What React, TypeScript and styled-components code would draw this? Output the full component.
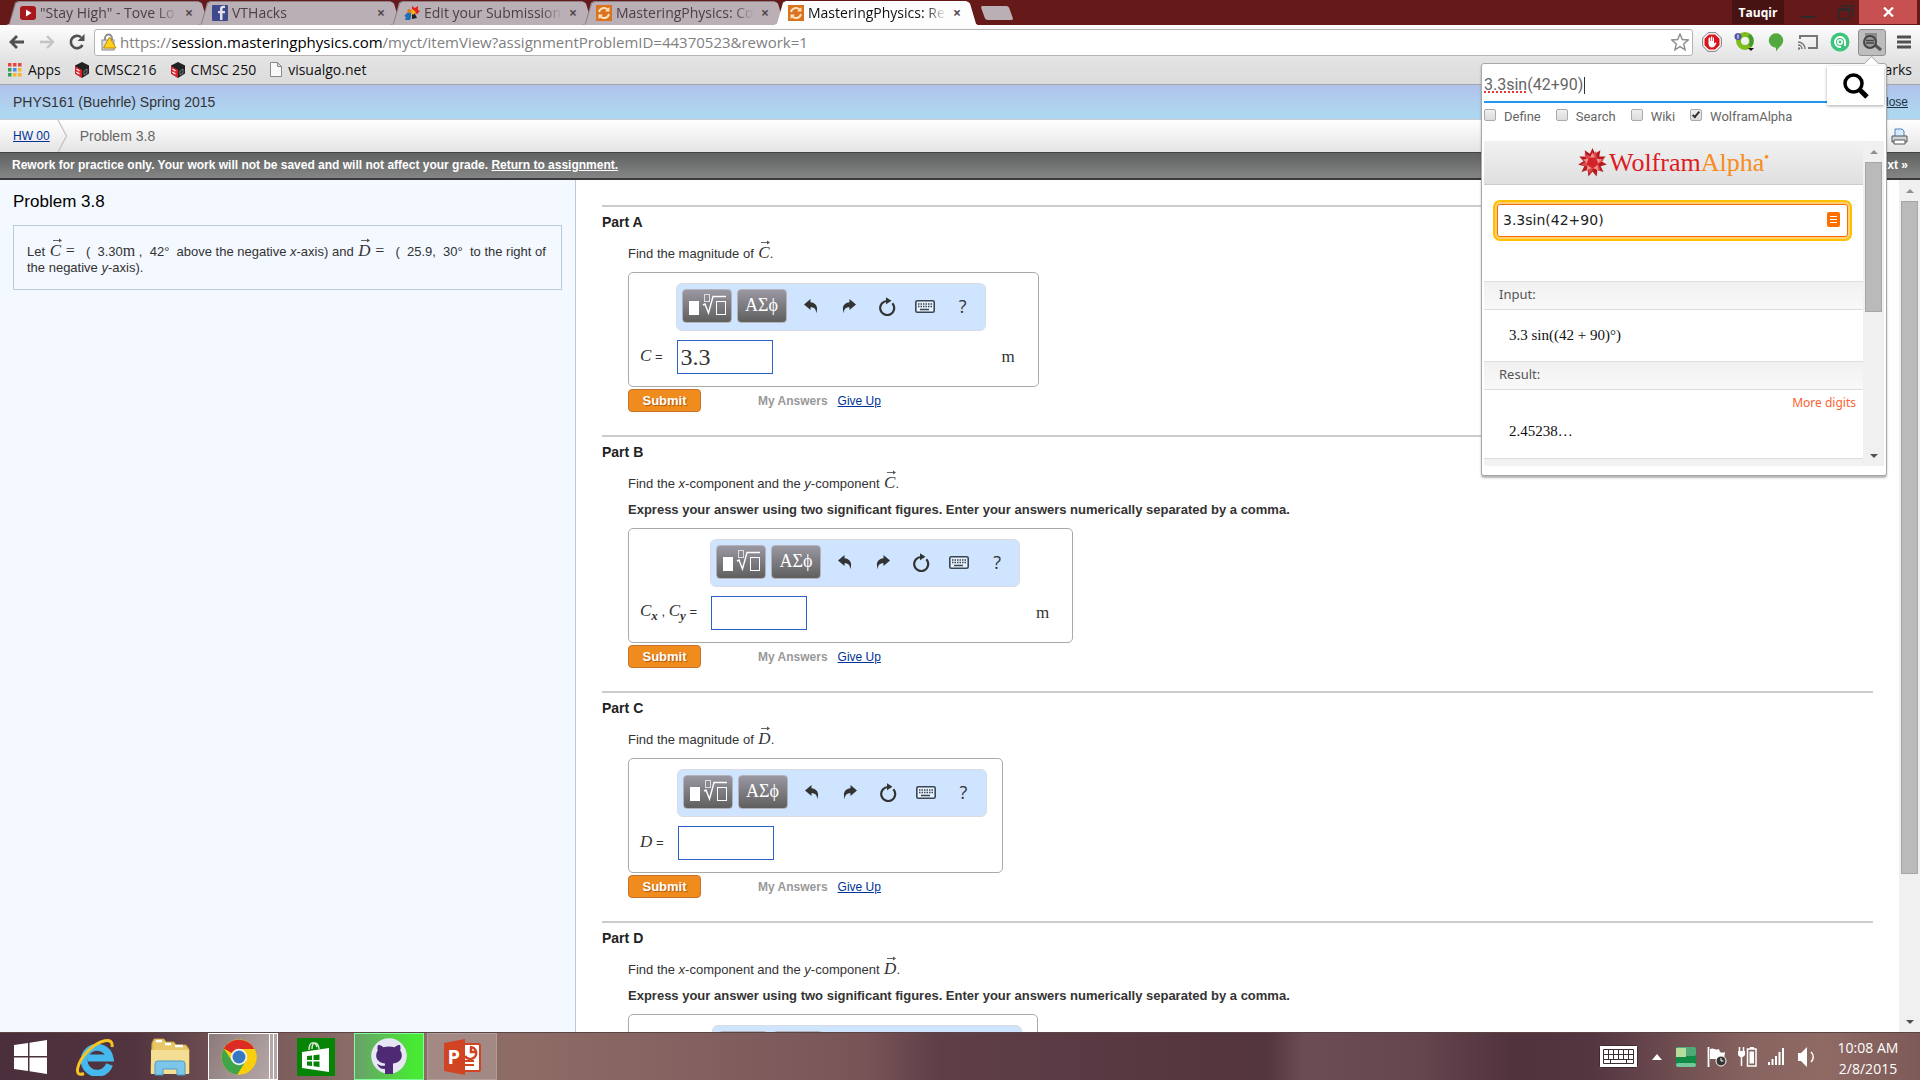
import React from "react";
import styled, { createGlobalStyle, css } from "styled-components";

const ui = `"Open Sans", "Noto Sans", sans-serif`;
const arial = `"Liberation Sans", Arial, sans-serif`;
const serif = `"Liberation Serif", "Times New Roman", serif`;

const Global = createGlobalStyle`
  *, *::before, *::after { box-sizing: border-box; }
  body { margin: 0; font-family: ${arial}; color: #333; background: #fff; overflow: hidden; }
  button { font: inherit; color: inherit; padding: 0; border: 0; background: none; }
  input { font: inherit; color: inherit; margin: 0; outline: none; }
  p, h1, h2 { margin: 0; }
  svg { display: block; flex: none; }
`;

const Screen = styled.div`
  position: relative;
  display: flex;
  flex-direction: column;
  height: 100vh;
`;

/* ---------- browser chrome ---------- */

const TabStrip = styled.header`
  display: flex;
  align-items: flex-end;
  height: 25px;
  padding-left: 6px;
  background: #661919;
  font-family: ${ui};
`;

const TabBox = styled.div<{ $active?: boolean }>`
  position: relative;
  z-index: ${(p) => (p.$active ? 2 : 1)};
  display: flex;
  align-items: center;
  width: 204px;
  height: 24px;
  margin-right: -12px;
  padding: 0 14px;
  gap: 4px;
  font-size: 14px;
  line-height: 22px;
  color: ${(p) => (p.$active ? "#111" : "#4b4045")};
  &::before, &::after {
    content: "";
    position: absolute;
    z-index: -1;
    inset: 0;
    background: ${(p) => (p.$active ? "#fdfdfd" : "#8d7f86")};
    clip-path: polygon(0 100%, 3px 95%, 9px 6%, 12px 0, 192px 0, 195px 6%, 201px 95%, 100% 100%);
  }
  &::after {
    inset: 1px 1px 0;
    background: ${(p) => (p.$active ? "#fdfdfd" : "#bbafb6")};
  }
`;

const TabTitle = styled.button`
  width: 138px;
  overflow: hidden;
  white-space: nowrap;
  text-align: left;
  mask-image: linear-gradient(90deg, #000 85%, transparent);
`;

const TabClose = styled.button`
  width: 14px;
  font-size: 14px;
  line-height: 16px;
  font-weight: 700;
  text-align: center;
  color: #56494e;
`;

const NewTab = styled.button`
  width: 28px;
  height: 14px;
  margin: 0 0 5px 17px;
  border-radius: 2px;
  background: #bbafb6;
  transform: skewX(20deg);
`;

const WindowControls = styled.div`
  display: flex;
  align-self: stretch;
  margin-left: auto;
  padding-right: 3px;
`;

const UserName = styled.button`
  width: 52px;
  height: 24px;
  background: #471212;
  color: #fff;
  font-size: 12px;
  font-weight: 700;
`;

const WinButton = styled.button<{ $w: number; $close?: boolean }>`
  display: flex;
  align-items: center;
  justify-content: center;
  width: ${(p) => p.$w}px;
  height: 24px;
  background: ${(p) => (p.$close ? "#c75050" : "transparent")};
`;

const NavArea = styled.div`
  display: flex;
  flex-direction: column;
  height: 60px;
  background: linear-gradient(#fdfdfd, #e2e2e2 36px, #dcdcdc);
  border-bottom: 1px solid #a3a3a3;
  font-family: ${ui};
`;

const NavRow = styled.div`
  display: flex;
  align-items: center;
  height: 33px;
  padding: 1px 0 0 2px;
`;

const NavButton = styled.button<{ $pressed?: boolean; $tight?: boolean }>`
  display: flex;
  align-items: center;
  justify-content: center;
  width: 28px;
  height: 27px;
  margin: 0 ${(p) => (p.$tight ? 1 : 2)}px;
  border-radius: 3px;
  ${(p) => p.$pressed && css`background: #bdbdbd; border: 1px solid #8e8e8e;`}
`;

const Omnibox = styled.div`
  display: flex;
  flex: 1;
  align-items: center;
  height: 27px;
  margin: 0 3px 0 2px;
  padding: 0 3px 0 6px;
  gap: 3px;
  border: 1px solid #b4b4b4;
  border-radius: 3px;
  background: #fff;
  font-size: 15px;
`;

const Address = styled.span`
  flex: 1;
  white-space: nowrap;
  color: #808080;
  b { font-weight: 400; color: #000; }
`;

const BookmarkRow = styled.nav`
  display: flex;
  align-items: center;
  height: 26px;
  padding: 0 8px 3px;
  gap: 14px;
  font-size: 14px;
  color: #111;
`;

const Bookmark = styled.a<{ $last?: boolean }>`
  display: flex;
  align-items: center;
  gap: 6px;
  color: inherit;
  text-decoration: none;
  ${(p) => p.$last && css`margin-left: auto;`}
`;

/* ---------- page ---------- */

const Course = styled.div`
  display: flex;
  align-items: center;
  justify-content: space-between;
  height: 35px;
  padding: 0 12px 0 13px;
  border-bottom: 1px solid #c9cdd2;
  background: linear-gradient(#b1c2eb, #aed6f0 80%);
  font-size: 14px;
  color: #333;
`;

const CloseLink = styled.a`
  font-size: 12px;
  color: #234;
`;

const Crumbs = styled.nav`
  display: flex;
  align-items: center;
  height: 32px;
  padding: 0 12px 0 13px;
  background: linear-gradient(#fff, #e4e4e4);
  font-size: 14px;
  color: #666;
  a { font-size: 12px; color: #039; }
  > svg { margin: 0 12px 0 7px; }
`;

const PrintButton = styled.button`
  margin-left: auto;
`;

const Notice = styled.div`
  display: flex;
  align-items: center;
  justify-content: space-between;
  height: 28px;
  padding: 0 12px 2px;
  border-top: 1px solid #444;
  border-bottom: 2px solid #3a3a3a;
  background: linear-gradient(#5f6261, #858585);
  font-size: 12px;
  font-weight: 700;
  color: #fff;
  a { color: inherit; }
`;

const Split = styled.div`
  display: flex;
  flex: 1;
  min-height: 0;
`;

const ProblemPane = styled.aside`
  flex: 0 0 30%;
  padding: 12px 13px;
  border-right: 1px solid #b9cbdb;
  background: #f4f8ff;
  h1 { font-size: 17px; font-weight: 400; line-height: 20px; color: #000; }
`;

const ProblemText = styled.div`
  margin-top: 13px;
  padding: 17px 12px 13px 13px;
  border: 1px solid #b9cbdb;
  font-size: 13px;
  line-height: 16px;
`;

const Parts = styled.main`
  flex: 1;
  overflow: hidden;
  padding: 25px 26px 0;
  background: #fff;
`;

const PartBlock = styled.section`
  padding: 7px 0 23px;
  border-top: 2px solid #ccc;
  h2 { font-size: 14px; line-height: 16px; color: #222; }
`;

const PartBody = styled.div`
  padding: 11px 0 0 26px;
  font-size: 13px;
`;

const Line = styled.p<{ $bold?: boolean }>`
  height: 26px;
  line-height: 26px;
  font-weight: ${(p) => (p.$bold ? 700 : 400)};
`;

const Var = styled.i`
  font: italic 17px/16px ${serif};
  sub { font-size: 13px; line-height: 1; vertical-align: -4px; font-weight: 700; }
`;

const VecBox = styled(Var)`
  position: relative;
  display: inline-block;
  margin-left: 1px;
  svg { position: absolute; top: -5px; left: 3px; }
`;

const Roman = styled.span<{ $eq?: boolean }>`
  font: 16px/16px ${serif};
  ${(p) => p.$eq && css`margin: 0 4px 0 1px;`}
`;

const AnswerBox = styled.div`
  display: inline-grid;
  grid-template-columns: auto 310px auto;
  column-gap: 13px;
  row-gap: 9px;
  margin-top: 5px;
  padding: 10px 0 12px 11px;
  border: 1px solid #aaa;
  border-radius: 5px;
  vertical-align: top;
`;

const EditorBar = styled.div`
  grid-column: 2;
  display: flex;
  align-items: center;
  height: 48px;
  padding: 0 0 2px 5px;
  border: 1px solid #d9dde3;
  border-radius: 6px;
  background: #cfe5ff;
`;

const PaletteButton = styled.button`
  display: flex;
  align-items: center;
  justify-content: center;
  width: 50px;
  height: 34px;
  margin-right: 5px;
  padding-bottom: 2px;
  border: 1px solid #b5b3b8;
  border-radius: 4px;
  background: linear-gradient(#9a97a2, #5f5f5f);
  color: #fff;
  font: 18px/1 ${serif};
`;

const EditorButton = styled.button`
  display: flex;
  align-items: center;
  justify-content: center;
  width: 38px;
  height: 34px;
  color: #333;
  font: 18px/1 ${ui};
`;

const AnswerLabel = styled.label`
  grid-column: 1;
  align-self: center;
  padding-bottom: 2px;
  white-space: nowrap;
`;

const AnswerInput = styled.input`
  width: 96px;
  height: 34px;
  margin-left: 1px;
  padding: 0 3px;
  border: 1px solid #2b62c9;
  background: #fff;
  font: 24px/1 ${serif};
`;

const Unit = styled.span`
  align-self: center;
  padding: 0 23px 2px 3px;
  font: 17px/1 ${serif};
`;

const NoUnit = styled.span`
  width: 2px;
`;

const Actions = styled.div`
  display: flex;
  align-items: center;
  height: 23px;
  margin-top: 2px;
  font-size: 12px;
  b { margin: 0 10px 0 57px; color: #999; }
  a { color: #039; }
`;

const Submit = styled.button`
  width: 73px;
  height: 23px;
  border: 1px solid #c9722c;
  border-radius: 4px;
  background: #f08c1e;
  color: #fff;
  font-size: 13px;
  font-weight: 700;
  text-shadow: 1px 1px 1px #a55a10;
`;

/* ---------- scroll bars ---------- */

const Track = styled.div`
  display: flex;
  flex: 0 0 21px;
  flex-direction: column;
  align-items: center;
  background: #f0f0f0;
`;

const Arrow = styled.span<{ $down?: boolean }>`
  display: flex;
  flex: 0 0 21px;
  align-items: center;
  ${(p) => p.$down && css`margin-top: auto;`}
  &::before {
    content: "";
    border: 4px solid transparent;
    ${(p) =>
      p.$down
        ? css`border-top-color: #505050; border-bottom-width: 0;`
        : css`border-bottom-color: #909090; border-top-width: 0;`}
  }
`;

const Thumb = styled.div<{ $share: string }>`
  width: 17px;
  height: ${(p) => p.$share};
  border: 1px solid #a6a6a6;
  background: #bababa;
`;

/* ---------- extension popup ---------- */

const Popup = styled.section`
  position: absolute;
  z-index: 5;
  top: 63px;
  right: 33px;
  width: 406px;
  padding: 2px;
  border: 1px solid #a8a8a8;
  border-radius: 3px;
  background: #fff;
  box-shadow: 0 2px 2px rgba(0, 0, 0, 0.3);
  font-family: Roboto, ${arial};
  color: #666;
  &::before {
    content: "";
    position: absolute;
    top: -6px;
    right: 9px;
    width: 11px;
    height: 11px;
    border: 1px solid #b4b4b4;
    border-width: 1px 0 0 1px;
    background: #fff;
    transform: rotate(45deg);
  }
`;

const SearchRow = styled.div`
  position: relative;
  display: flex;
  height: 39px;
  &::before, &::after {
    content: "";
    position: absolute;
  }
  /* spelling mark under the unknown word */
  &::before {
    top: 25px;
    left: 0;
    width: 43px;
    height: 2px;
    background: repeating-linear-gradient(90deg, #e33 0 2px, transparent 2px 4px);
  }
  /* caret */
  &::after {
    top: 11px;
    left: 100px;
    width: 1px;
    height: 17px;
    background: #333;
  }
`;

const QueryInput = styled.input`
  flex: 1;
  min-width: 0;
  height: 37px;
  padding: 2px 0 0;
  border: 0;
  border-bottom: 2px solid #2196f3;
  font-size: 16px;
`;

const SearchButton = styled.button`
  display: flex;
  align-items: center;
  justify-content: center;
  width: 57px;
  background: #fff;
  box-shadow: 0 1px 3px rgba(0, 0, 0, 0.35);
`;

const Options = styled.div`
  display: flex;
  gap: 15px;
  height: 36px;
  padding: 4px 0 0;
  font-size: 13px;
  line-height: 16px;
`;

const Option = styled.label`
  display: flex;
  gap: 8px;
`;

const Tick = styled.input`
  appearance: none;
  position: relative;
  width: 12px;
  height: 12px;
  border: 1px solid #aaa;
  border-radius: 2px;
  background: linear-gradient(#efefef, #dcdcdc);
  &:checked::after {
    content: "";
    position: absolute;
    top: 0;
    left: 3px;
    width: 4px;
    height: 8px;
    border: solid #333;
    border-width: 0 2px 2px 0;
    transform: rotate(40deg);
  }
`;

const Frame = styled.div`
  display: flex;
  height: 325px;
  margin-bottom: 7px;
  overflow: hidden;
  font-family: "Noto Sans", ${ui};
`;

const FrameBody = styled.div`
  flex: 1;
`;

const Brand = styled.div`
  display: flex;
  align-items: center;
  justify-content: center;
  gap: 2px;
  height: 44px;
  border-bottom: 1px solid #ccc;
  background: linear-gradient(#f2f2f2, #dfdfdf);
  font: 26px/1 ${serif};
  color: #dd1b22;
  span { color: #f78c22; }
  sup { font-size: 8px; line-height: 1; vertical-align: 12px; }
`;

const AlphaBox = styled.label`
  display: flex;
  align-items: center;
  height: 33px;
  margin: 19px 15px 44px 13px;
  padding: 0 7px 2px 5px;
  border: 1px solid #f96a00;
  border-radius: 3px;
  box-shadow: 0 0 0 2px #ffd070, 0 0 0 4px #ffc000;
`;

const AlphaInput = styled.input`
  flex: 1;
  min-width: 0;
  padding: 0;
  border: 0;
  font: 14px/20px "DejaVu Sans", sans-serif;
  color: #222;
`;

const PodTitle = styled.h2`
  height: 29px;
  padding-left: 15px;
  border: solid #ddd;
  border-width: 1px 0;
  background: linear-gradient(#f1f1f1, #f9f9f9);
  font-size: 13px;
  font-weight: 400;
  line-height: 25px;
  color: #555;
`;

const Pod = styled.div<{ $top: number; $h: number }>`
  display: flex;
  flex-direction: column;
  height: ${(p) => p.$h}px;
  padding: ${(p) => p.$top}px 0 0 25px;
  font: 15px/18px ${serif};
  color: #111;
`;

const MoreDigits = styled.a`
  align-self: flex-end;
  margin: 0 7px 10px 0;
  font: 12px/18px "Noto Sans", ${ui};
  color: #fa6232;
  text-decoration: none;
`;

/* ---------- taskbar ---------- */

const Taskbar = styled.footer`
  display: flex;
  align-items: stretch;
  height: 48px;
  border-top: 1px solid #5a4444;
  background: linear-gradient(90deg, #4b2f3c 0, #51343f 7%, #6d4f52 11%, #8b6b66 18%, #8d6c66 27%, #82605f 37%, #785457 45%, #5f3e48 49%, #55363f 63%, #54363f 66%, #6d4d55 68%, #65454e 74%, #50323d 79%, #543641 83%, #87635f 91%, #8f6a65 95%, #7d5a58 100%);
  color: #fff;
  font-family: ${ui};
`;

const TaskButton = styled.button<{ $w: number; $tone?: "open" | "green" | "dim" }>`
  display: flex;
  align-items: center;
  justify-content: center;
  width: ${(p) => p.$w}px;
  ${(p) => p.$tone === "open" && css`border: 1px solid #fff; background: linear-gradient(115deg, #8d7a7a, #b5a7a7);`}
  ${(p) => p.$tone === "green" && css`border: 1px solid #7dff9a; background: linear-gradient(90deg, #6b9f6b, #48e834 85%);`}
  ${(p) => p.$tone === "dim" && css`border: 1px solid #b09c99; background: rgba(255, 255, 255, 0.2);`}
`;

const Stack = styled.span`
  width: 4px;
  border: solid #fff;
  border-width: 1px 1px 1px 0;
  background: #b5a7a7;
`;

const Spacer = styled.span<{ $w: number }>`
  width: ${(p) => p.$w}px;
`;

const Tray = styled.div`
  display: flex;
  align-items: center;
  gap: 14px;
  margin-left: auto;
  padding-right: 21px;
`;

const TrayGroup = styled.div`
  display: flex;
  align-items: center;
  gap: 11px;
`;

const Clock = styled.time`
  width: 62px;
  margin-left: 8px;
  padding-top: 2px;
  font-size: 14px;
  line-height: 21px;
  text-align: center;
  white-space: nowrap;
`;

/* ---------- icons ---------- */

const YouTubeIcon = () => (
  <svg width="16" height="16" viewBox="0 0 16 16"><rect y="1" width="16" height="14" rx="3" fill="#a5191c" /><path d="M6 4.500l5.500 3.500L6 11.500z" fill="#fff" /></svg>
);
const FacebookIcon = () => (
  <svg width="16" height="16" viewBox="0 0 16 16"><rect width="16" height="16" rx="1" fill="#3d4b8c" /><path d="M13 3h-1.500C10.500 3 10.500 3.700 10.500 4.500V6H13v2.300h-2.500V15H8V8.300H6V6h2V4c0-2 1.200-3.200 3-3.200h2z" fill="#e6e0ea" /></svg>
);
const PinwheelIcon = () => (
  <svg width="16" height="16" viewBox="0 0 16 16"><path d="M8 7V1l3 2 3-2v4l2 1-3 3-3-1z" fill="#e3241c" /><path d="M8 8L3 8l1-4 4 1z" fill="#d67f1e" /><path d="M7 8l-4 0-3 3 2 1-1 3 5 0 1-3z" fill="#1e6fb5" /><path d="M8 8v6l5-1-2-4z" fill="#222" /><path d="M8 4l4 3-3 3-2-3z" fill="#f5b61c" /></svg>
);
const MasteringIcon = () => (
  <svg width="16" height="16" viewBox="0 0 16 16"><rect width="16" height="16" fill="#d9731f" /><path d="M3 7a5 5 0 0 1 8.500-2.500M13 9a5 5 0 0 1-8.500 2.500" fill="none" stroke="#ffe3bd" strokeWidth="2" /><path d="M13.500 2v4.500H9zM2.500 14V9.500H7z" fill="#ffe3bd" /></svg>
);
const BackArrow = () => (
  <svg width="18" height="16" viewBox="0 0 18 16"><path d="M16 8H3M9 2L3 8l6 6" fill="none" stroke="#505050" strokeWidth="2.800" /></svg>
);
const ForwardArrow = () => (
  <svg width="18" height="16" viewBox="0 0 18 16"><path d="M2 8h13M9 2l6 6-6 6" fill="none" stroke="#c4c4c4" strokeWidth="2.400" /></svg>
);
const ReloadIcon = () => (
  <svg width="18" height="18" viewBox="0 0 18 18"><path d="M14.500 12A6.200 6.200 0 1 1 13 4.200" fill="none" stroke="#505050" strokeWidth="2.600" /><path d="M16.500 1v7H9.500z" fill="#505050" /></svg>
);
const LockIcon = () => (
  <svg width="16" height="18" viewBox="0 0 16 18"><path d="M4 8V5a3.500 3.500 0 0 1 7 0v3" fill="none" stroke="#8b8b8b" strokeWidth="1.800" /><rect x="1" y="7" width="12" height="10" fill="#ddd" stroke="#888" /><path d="M8.500 4L15 15H2.500z" fill="#ffd21c" stroke="#c08b00" /></svg>
);
const StarIcon = () => (
  <svg width="18" height="18" viewBox="0 0 18 18"><path d="M9 1l2.300 5.500 5.900.5-4.500 3.900 1.400 5.900L9 13.600l-5.100 3.200 1.400-5.900L.8 7l5.900-.5z" fill="#fff" stroke="#8c8c8c" strokeWidth="1.400" /></svg>
);
const StopHandIcon = () => (
  <svg width="20" height="20" viewBox="0 0 20 20"><path d="M6 .7h8L19.300 6v8L14 19.300H6L.7 14V6z" fill="#fff" stroke="#777" /><path d="M6.800 2.500h6.400l4.300 4.300v6.400l-4.300 4.300H6.800l-4.300-4.300V6.800z" fill="#d9141c" /><path d="M6.500 6.500v5c0 2.500 1.500 4 3.500 4s3-1.500 4.500-4.500l-1.500-.5-1 1V5.500h-1.200V9h-.6V4.500H9V9h-.6V5.500H7.200z" fill="#fff" /></svg>
);
const RingIcon = () => (
  <svg width="20" height="20" viewBox="0 0 20 20"><circle cx="11" cy="9" r="6.500" fill="none" stroke="#7dbd1e" strokeWidth="5" /><path d="M15 3a8 8 0 0 1 1 11" fill="none" stroke="#3f9a36" strokeWidth="3.500" /><circle cx="4" cy="4.500" r="3.500" fill="#5454a8" /><path d="M4 2.500v4" stroke="#fff" /><path d="M14 16h6l-3 3z" fill="#111" /></svg>
);
const HangoutsIcon = () => (
  <svg width="16" height="19" viewBox="0 0 16 19"><circle cx="8" cy="7.500" r="7.200" fill="#53a940" /><path d="M8 12h5l-5 6.500z" fill="#53a940" /></svg>
);
const CastIcon = () => (
  <svg width="20" height="16" viewBox="0 0 20 16"><path d="M2 5V2h17v12h-9" fill="none" stroke="#777" strokeWidth="2" /><path d="M0 8a7 7 0 0 1 7 7M0 11a4 4 0 0 1 4 4" fill="none" stroke="#777" strokeWidth="1.500" /><circle cx="1" cy="14.500" r="1.200" fill="#777" /></svg>
);
const AtIcon = () => (
  <svg width="20" height="20" viewBox="0 0 20 20"><circle cx="10" cy="10" r="9.500" fill="#3cc47c" /><path d="M15 14V9.500A5 5 0 1 0 10 15h1" fill="none" stroke="#fff" strokeWidth="2" /><circle cx="10" cy="10" r="2.200" fill="none" stroke="#fff" strokeWidth="1.600" /></svg>
);
const LensIcon = () => (
  <svg width="20" height="20" viewBox="0 0 20 20"><rect x="3" y="1" width="12" height="9" fill="#8a8a8a" /><path d="M13 13l6 5" stroke="#555" strokeWidth="3" /><circle cx="8" cy="10" r="6" fill="#999" stroke="#444" strokeWidth="2" /><path d="M4 8.500h8M4 11h8" stroke="#444" strokeWidth="1.500" /></svg>
);
const MenuIcon = () => (
  <svg width="14" height="14" viewBox="0 0 14 14"><path d="M0 2h14M0 7h14M0 12h14" stroke="#505050" strokeWidth="3" /></svg>
);
const AppsIcon = () => (
  <svg width="14" height="14" viewBox="0 0 14 14">
    {["#e8453c", "#e8453c", "#e8453c", "#34a04f", "#4a8af4", "#f7b529", "#34a04f", "#f7b529", "#f7b529"].map((c, i) => (
      <rect key={i} x={(i % 3) * 5} y={Math.floor(i / 3) * 5} width="3.500" height="3.500" fill={c} />
    ))}
  </svg>
);
const CubeIcon = () => (
  <svg width="14" height="16" viewBox="0 0 14 16"><path d="M7 0l7 3.500v8L7 16l-7-4.500v-8z" fill="#222" /><path d="M0 4l7 4v8l-7-4.500z" fill="#d9242b" /><path d="M1.500 7l3 2M1.500 10l3 2" stroke="#fff" strokeWidth="1.200" /><path d="M9 9l3-2v4l-3 2z" fill="none" stroke="#777" /></svg>
);
const PageIcon = () => (
  <svg width="12" height="15" viewBox="0 0 12 15"><path d="M.5.5h7l4 4v10H.5zM7.500.5v4h4" fill="#fafafa" stroke="#8a8a8a" /></svg>
);
const ChevronDivider = () => (
  <svg width="11" height="32" viewBox="0 0 11 32"><path d="M1 0l8.500 16L1 32" fill="none" stroke="#c4c4c4" strokeWidth="1.300" /></svg>
);
const PrinterIcon = () => (
  <svg width="17" height="17" viewBox="0 0 17 17"><path d="M4 8V1h7l2 2v5" fill="#d7ebff" stroke="#4f83bd" /><path d="M1 8h15v6H1z" fill="#cfd4da" stroke="#555" /><path d="M3 12h11v4H3z" fill="#fff" stroke="#555" /></svg>
);
const RootIcon = () => (
  <svg width="38" height="24" viewBox="0 0 38 24"><rect x="1" y="8" width="10" height="14" fill="#fff" /><rect x="16.500" y="1.500" width="5" height="7" fill="none" stroke="#ddd" /><path d="M15 12l2-1 3.500 9L25 3.500h13" fill="none" stroke="#fff" strokeWidth="1.400" /><rect x="28.500" y="8.500" width="9" height="13" fill="none" stroke="#fff" /></svg>
);
const UndoIcon = ({ flip }: { flip?: boolean }) => (
  <svg width="14" height="15" viewBox="0 0 14 15"><path transform={flip ? "matrix(-1 0 0 1 14 0)" : undefined} d="M0 5.500L6.500 0v3.200c5 .3 8.500 4.500 5.500 11.300.5-4-1.500-6.300-5.500-6.300V11z" fill="#333" /></svg>
);
const ResetIcon = () => (
  <svg width="18" height="19" viewBox="0 0 18 19"><path d="M14.300 6.200A7 7 0 1 1 9.500 4" fill="none" stroke="#333" strokeWidth="2.200" /><path d="M8 .3l5.500 3.500L8 7.300z" fill="#333" /></svg>
);
const KeyboardIcon = () => (
  <svg width="20" height="13" viewBox="0 0 20 13"><rect x=".8" y=".8" width="18.400" height="11.400" rx="1.500" fill="#e6f1ff" stroke="#3c4650" strokeWidth="1.600" /><path d="M3 4h14M3 6.500h14" stroke="#3c4650" strokeWidth="1.500" strokeDasharray="1.500 1" /><path d="M5 9.500h9" stroke="#3c4650" strokeWidth="1.500" /></svg>
);
const SearchIcon = () => (
  <svg width="26" height="26" viewBox="0 0 26 26"><circle cx="10.500" cy="10.500" r="8.500" fill="none" stroke="#000" strokeWidth="3.500" /><path d="M16 16l8 8" stroke="#000" strokeWidth="5" /></svg>
);
const SpikeyIcon = () => {
  const star = (n: number, outer: number, inner: number, turn: number) =>
    Array.from({ length: n * 2 }, (_, i) => {
      const r = i % 2 ? inner : outer;
      const a = (Math.PI * i) / n + turn;
      return `${14.5 + r * Math.sin(a)},${14.5 - r * Math.cos(a)}`;
    }).join(" ");
  return (
    <svg width="29" height="29" viewBox="0 0 29 29">
      <polygon points={star(11, 14.5, 9, 0)} fill="#b51a20" />
      <polygon points={star(6, 12, 6, 0.3)} fill="#dd4a4a" />
      <polygon points={star(5, 10, 5, 0)} fill="#f0918c" />
      <polygon points={star(5, 6, 5, 0.6)} fill="#d2232a" />
    </svg>
  );
};
const EqualsIcon = () => (
  <svg width="13" height="15" viewBox="0 0 13 15"><rect width="13" height="15" rx="2" fill="#ff6f00" /><path d="M3 4.500h7M3 7.500h7M3 10.500h7" stroke="#fff" strokeWidth="1.200" /></svg>
);
const StartIcon = () => (
  <svg width="33" height="34" viewBox="0 0 33 34"><path d="M0 5l14-2v13H0zM15.500 2.800L33 0v16H15.500zM0 17.500h14V31L0 29zM15.500 17.500H33V34l-17.500-2.800z" fill="#fff" /></svg>
);
const ExplorerEIcon = () => (
  <svg width="38" height="38" viewBox="0 0 38 38"><path d="M33.500 26.500a13 13 0 1 1 .5-6.500H12" fill="none" stroke="#45b8ee" strokeWidth="7" /><path d="M8 35.500C-3 40 1 24 12 13S38-2 36 9" fill="none" stroke="#f6c423" strokeWidth="3" /></svg>
);
const FolderIcon = () => (
  <svg width="40" height="38" viewBox="0 0 40 38"><path d="M2 5l2-4h10l2 3h8l2 3h10l3 4v24H1z" fill="#e7c766" stroke="#c39b3a" /><path d="M6 3h6M15 6h6M25 8h8" stroke="#fff" strokeWidth="2.500" /><path d="M1 12h38v24H1z" fill="#f4de93" /><path d="M5 37V26q0-3 3-3h24q3 0 3 3v11h-8v-6H13v6z" fill="#7cc6ea" stroke="#4a9cc9" /></svg>
);
const ChromeIcon = () => (
  <svg width="36" height="36" viewBox="0 0 36 36"><circle cx="18" cy="18" r="17.500" fill="#fbce0b" /><path d="M18 18L2.800 9.500A17.500 17.500 0 0 1 33.500 10H18z" fill="#dc2c24" /><path d="M2.800 9.500A17.500 17.500 0 0 0 16.500 35.500L25 22 11 22z" fill="#3fa548" /><path d="M18 10h15.500A17.500 17.500 0 0 1 16.500 35.500L25 22z" fill="#fbce0b" /><circle cx="18" cy="18" r="8.200" fill="#f3f3f3" /><circle cx="18" cy="18" r="6.500" fill="#3678c2" /></svg>
);
const StoreIcon = () => (
  <svg width="38" height="38" viewBox="0 0 38 38"><rect width="38" height="38" fill="#058405" /><path d="M12 12c0-9 6-9 8-3M15 11c0-8 6-8 7 0" fill="none" stroke="#cfe8cf" strokeWidth="1.500" /><path d="M5 14l27-4v24L5 30z" fill="#fff" /><path d="M10 18l5-.6V22h-5zM16.500 17.200l6-.8V22h-6zM10 23.500h5V28l-5-.6zM16.500 23.500h6V29l-6-.8z" fill="#058405" /></svg>
);
const OctocatIcon = () => (
  <svg width="36" height="37" viewBox="0 0 36 37"><circle cx="18" cy="18" r="17.800" fill="#e6e6f5" /><path d="M7 7c2-.5 4 1 5.500 2.200 3-.8 8-.8 11 0C25 8 27 6.500 29 7c.7 2 .7 4 .2 5.500C33 18 30 25 22 25.500V36h-8v-5c-4 0-6-1-8-5 3 1 4 2.500 8 1.500v-2C6 25 3 18 6.800 12.500 6.300 11 6.300 9 7 7z" fill="#4d2a73" /></svg>
);
const SlidesBox = styled.span`
  position: relative;
  display: flex;
  align-items: center;
  b { position: absolute; left: 4px; font: 700 20px/20px ${ui}; }
`;
const SlidesIcon = () => (
  <SlidesBox>
    <svg width="37" height="36" viewBox="0 0 37 36"><rect x="18" y="5" width="18" height="27" rx="1.500" fill="#fff" stroke="#d04423" strokeWidth="2" /><path d="M26 8a6 6 0 1 1-5 9M27 8v5h5" fill="none" stroke="#d04423" strokeWidth="2.500" /><path d="M20 22h10M20 26h10" stroke="#d04423" strokeWidth="2" /><path d="M0 4l21-4v36L0 32z" fill="#d04423" /></svg>
    <b>P</b>
  </SlidesBox>
);
const TouchKeyboardIcon = () => (
  <svg width="39" height="23" viewBox="0 0 39 23"><rect x=".5" y=".5" width="38" height="22" rx="1" fill="#fff" stroke="#3a2c30" /><path d="M4.500 4.500h30v5h-30zM4.500 9.500h30v5h-30zM4.500 14.500h30v4h-30zM9.500 4.500v10M14.500 4.500v10M19.500 4.500v10M24.500 4.500v10M29.500 4.500v10M11.500 14.500v4M27.500 14.500v4" fill="none" stroke="#3a2c30" /></svg>
);
const TrayArrowIcon = () => (
  <svg width="10" height="6" viewBox="0 0 10 6"><path d="M5 0l5 6H0z" fill="#fff" /></svg>
);
const GreenAppIcon = () => (
  <svg width="20" height="20" viewBox="0 0 20 20"><rect width="20" height="20" rx="2" fill="#118a45" /><rect width="20" height="9" rx="2" fill="#4faa78" /><rect y="1" width="10" height="9" fill="#b5dc9a" /><rect y="16" width="20" height="4" rx="2" fill="#74c79a" /></svg>
);
const FlagIcon = () => (
  <svg width="20" height="20" viewBox="0 0 20 20"><path d="M1.500 0v20" stroke="#fff" strokeWidth="1.800" /><path d="M3 2c4-2 5 2 9 0l1 3c2 1 3 1 5 0l-1 7H3z" fill="#fff" /><circle cx="14" cy="14" r="5" fill="#333" stroke="#fff" /><path d="M14 11v3h2.500" fill="none" stroke="#fff" /></svg>
);
const BatteryIcon = () => (
  <svg width="19" height="20" viewBox="0 0 19 20"><path d="M1.500 0v5M5.500 0v5M3.500 9v10" stroke="#fff" strokeWidth="1.500" /><path d="M0 4h7v4L5 10H2L0 8z" fill="#fff" /><rect x="9.500" y="2" width="8.500" height="17" fill="none" stroke="#fff" strokeWidth="1.500" /><path d="M11.500 4.500h4.500v12h-4.500zM12 0h4v2h-4z" fill="#fff" /></svg>
);
const SignalIcon = () => (
  <svg width="16" height="17" viewBox="0 0 16 17"><path d="M0 14h2v3H0zM3.500 11h2v6h-2zM7 8h2v9H7zM10.500 4h2v13h-2zM14 0h2v17h-2z" fill="#fff" /></svg>
);
const SpeakerIcon = () => (
  <svg width="17" height="20" viewBox="0 0 17 20"><path d="M0 6h3L9 0v20l-6-6H0z" fill="#fff" /><path d="M13 5c3 3 3 7 0 10" fill="none" stroke="#fff" strokeWidth="1.500" /></svg>
);

/* ---------- composition ---------- */

const Vec = ({ name }: { name: string }) => (
  <VecBox>
    <svg width="9" height="5" viewBox="0 0 9 5"><path d="M0 2.500h7" stroke="#666" /><path d="M6 .5L9 2.500 6 4.500z" fill="#555" /></svg>
    {name}
  </VecBox>
);

type TabProps = { icon: React.ReactNode; title: string; active?: boolean };
const Tab = ({ icon, title, active }: TabProps) => (
  <TabBox $active={active}>
    {icon}
    <TabTitle>{title}</TabTitle>
    <TabClose aria-label="Close tab">×</TabClose>
  </TabBox>
);

type PartProps = {
  id: string;
  prompt: React.ReactNode;
  express?: boolean;
  label: React.ReactNode;
  value?: string;
  unit?: string;
};
const Part = ({ id, prompt, express, label, value, unit }: PartProps) => (
  <PartBlock>
    <h2>Part {id}</h2>
    <PartBody>
      <Line>{prompt}</Line>
      {express && <Line $bold>Express your answer using two significant figures. Enter your answers numerically separated by a comma.</Line>}
      <AnswerBox>
        <EditorBar>
          <PaletteButton aria-label="Templates"><RootIcon /></PaletteButton>
          <PaletteButton>ΑΣϕ</PaletteButton>
          <EditorButton aria-label="Undo"><UndoIcon /></EditorButton>
          <EditorButton aria-label="Redo"><UndoIcon flip /></EditorButton>
          <EditorButton aria-label="Reset"><ResetIcon /></EditorButton>
          <EditorButton aria-label="Keyboard"><KeyboardIcon /></EditorButton>
          <EditorButton>?</EditorButton>
        </EditorBar>
        <NoUnit />
        <AnswerLabel htmlFor={`answer-${id}`}>{label} =</AnswerLabel>
        <AnswerInput id={`answer-${id}`} defaultValue={value} />
        {unit && <Unit>{unit}</Unit>}
      </AnswerBox>
      <Actions>
        <Submit>Submit</Submit>
        <b>My Answers</b>
        <a href="#give-up">Give Up</a>
      </Actions>
    </PartBody>
  </PartBlock>
);

export default function App() {
  return (
    <Screen>
      <Global />
      <TabStrip>
        <Tab icon={<YouTubeIcon />} title={'"Stay High" - Tove Lo'} />
        <Tab icon={<FacebookIcon />} title="VTHacks" />
        <Tab icon={<PinwheelIcon />} title="Edit your Submission" />
        <Tab icon={<MasteringIcon />} title="MasteringPhysics: Co" />
        <Tab icon={<MasteringIcon />} title="MasteringPhysics: Re" active />
        <NewTab aria-label="New tab" />
        <WindowControls>
          <UserName>Tauqir</UserName>
          <WinButton $w={48} aria-label="Minimize"><svg width="14" height="14" viewBox="0 0 14 14"><path d="M0 12h14" stroke="#2b2b2b" strokeWidth="2" /></svg></WinButton>
          <WinButton $w={27} aria-label="Restore"><svg width="16" height="15" viewBox="0 0 16 15"><path d="M1 4h11v10H1zM3 1h12v10" fill="none" stroke="#2b2b2b" strokeWidth="1.500" /><path d="M1 5h11" stroke="#2b2b2b" strokeWidth="2" /></svg></WinButton>
          <WinButton $w={58} $close aria-label="Close"><svg width="11" height="10" viewBox="0 0 11 10"><path d="M1 .5l9 9M10 .5l-9 9" stroke="#fff" strokeWidth="2.200" /></svg></WinButton>
        </WindowControls>
      </TabStrip>

      <NavArea>
        <NavRow>
          <NavButton $tight aria-label="Back"><BackArrow /></NavButton>
          <NavButton $tight aria-label="Forward"><ForwardArrow /></NavButton>
          <NavButton $tight aria-label="Reload"><ReloadIcon /></NavButton>
          <Omnibox>
            <LockIcon />
            <Address>https://<b>session.masteringphysics.com</b>/myct/itemView?assignmentProblemID=44370523&amp;rework=1</Address>
            <StarIcon />
          </Omnibox>
          <NavButton aria-label="Blocker"><StopHandIcon /></NavButton>
          <NavButton aria-label="Downloads"><RingIcon /></NavButton>
          <NavButton aria-label="Hangouts"><HangoutsIcon /></NavButton>
          <NavButton aria-label="Cast"><CastIcon /></NavButton>
          <NavButton aria-label="Mail"><AtIcon /></NavButton>
          <NavButton $pressed aria-label="Lookup"><LensIcon /></NavButton>
          <NavButton aria-label="Menu"><MenuIcon /></NavButton>
        </NavRow>
        <BookmarkRow>
          <Bookmark href="#apps"><AppsIcon />Apps</Bookmark>
          <Bookmark href="#216"><CubeIcon />CMSC216</Bookmark>
          <Bookmark href="#250"><CubeIcon />CMSC 250</Bookmark>
          <Bookmark href="#visualgo"><PageIcon />visualgo.net</Bookmark>
          <Bookmark href="#other" $last>Other bookmarks</Bookmark>
        </BookmarkRow>
      </NavArea>

      <Course>
        <span>PHYS161 (Buehrle) Spring 2015</span>
        <CloseLink href="#close">Close</CloseLink>
      </Course>
      <Crumbs>
        <a href="#hw">HW 00</a>
        <ChevronDivider />
        <span>Problem 3.8</span>
        <PrintButton aria-label="Print"><PrinterIcon /></PrintButton>
      </Crumbs>
      <Notice>
        <span>Rework for practice only. Your work will not be saved and will not affect your grade. <a href="#return">Return to assignment.</a></span>
        <span>Next »</span>
      </Notice>

      <Split>
        <ProblemPane>
          <h1>Problem 3.8</h1>
          <ProblemText>
            <p>
              Let <Vec name="C" /> <Roman $eq>=</Roman>&nbsp; ( &nbsp;3.30<Roman>m</Roman> , &nbsp;42° &nbsp;above the negative <i>x</i>-axis) and <Vec name="D" /> <Roman $eq>=</Roman>&nbsp; ( &nbsp;25.9, &nbsp;30° &nbsp;to the right of the negative <i>y</i>-axis).
            </p>
          </ProblemText>
        </ProblemPane>
        <Parts>
          <Part id="A" prompt={<>Find the magnitude of <Vec name="C" />.</>} label={<Var>C</Var>} value="3.3" unit="m" />
          <Part id="B" express prompt={<>Find the <i>x</i>-component and the <i>y</i>-component <Vec name="C" />.</>} label={<><Var>C<sub>x</sub></Var> , <Var>C<sub>y</sub></Var></>} unit="m" />
          <Part id="C" prompt={<>Find the magnitude of <Vec name="D" />.</>} label={<Var>D</Var>} />
          <Part id="D" express prompt={<>Find the <i>x</i>-component and the <i>y</i>-component <Vec name="D" />.</>} label={<><Var>D<sub>x</sub></Var> , <Var>D<sub>y</sub></Var></>} />
        </Parts>
        <Track><Arrow /><Thumb $share="79%" /><Arrow $down /></Track>
      </Split>

      <Popup>
        <SearchRow>
          <QueryInput aria-label="Query" defaultValue="3.3sin(42+90)" />
          <SearchButton aria-label="Search"><SearchIcon /></SearchButton>
        </SearchRow>
        <Options>
          <Option><Tick type="checkbox" />Define</Option>
          <Option><Tick type="checkbox" />Search</Option>
          <Option><Tick type="checkbox" />Wiki</Option>
          <Option><Tick type="checkbox" defaultChecked />WolframAlpha</Option>
        </Options>
        <Frame>
          <FrameBody>
            <Brand><SpikeyIcon /><div>Wolfram<span>Alpha<sup>●</sup></span></div></Brand>
            <AlphaBox>
              <AlphaInput aria-label="Computation" defaultValue="3.3sin(42+90)" />
              <EqualsIcon />
            </AlphaBox>
            <PodTitle>Input:</PodTitle>
            <Pod $top={16} $h={51}>3.3 sin((42 + 90)°)</Pod>
            <PodTitle>Result:</PodTitle>
            <Pod $top={4} $h={68}><MoreDigits href="#digits">More digits</MoreDigits>2.45238…</Pod>
            <PodTitle />
          </FrameBody>
          <Track><Arrow /><Thumb $share="150px" /><Arrow $down /></Track>
        </Frame>
      </Popup>

      <Taskbar>
        <Spacer $w={2} />
        <TaskButton $w={56} aria-label="Start"><StartIcon /></TaskButton>
        <TaskButton $w={74} aria-label="Internet Explorer"><ExplorerEIcon /></TaskButton>
        <TaskButton $w={76} aria-label="File Explorer"><FolderIcon /></TaskButton>
        <TaskButton $w={62} $tone="open" aria-label="Chrome"><ChromeIcon /></TaskButton>
        <Stack /><Stack />
        <TaskButton $w={76} aria-label="Store"><StoreIcon /></TaskButton>
        <TaskButton $w={70} $tone="green" aria-label="GitHub"><OctocatIcon /></TaskButton>
        <Spacer $w={3} />
        <TaskButton $w={70} $tone="dim" aria-label="PowerPoint"><SlidesIcon /></TaskButton>
        <Tray>
          <TouchKeyboardIcon />
          <TrayArrowIcon />
          <TrayGroup>
            <GreenAppIcon />
            <FlagIcon />
            <BatteryIcon />
            <SignalIcon />
          </TrayGroup>
          <SpeakerIcon />
          <Clock>10:08 AM<br />2/8/2015</Clock>
        </Tray>
      </Taskbar>
    </Screen>
  );
}
